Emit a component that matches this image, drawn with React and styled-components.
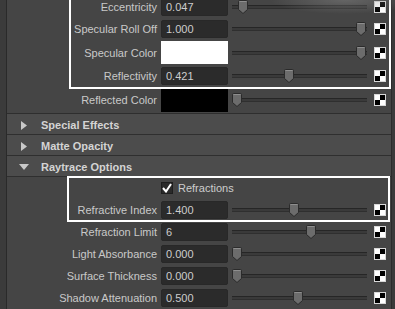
import React from "react";
import styled, { createGlobalStyle } from "styled-components";

const GlobalStyle = createGlobalStyle`
  html, body {
    margin: 0;
    height: 309px;
    overflow: hidden;
    background: #3b3b3b;
    font-family: "Liberation Sans", Arial, sans-serif;
  }
`;

const Page = styled.div`
  position: relative;
  width: 395px;
  height: 309px;
  overflow: hidden;
`;

const Frame = styled.div`
  margin-left: 6px;
  width: 384px;
  height: 320px;
  border-left: 1px solid #2a2a2a;
  border-right: 1px solid #2c2c2c;
  background: #454545;
  margin-top: -4px;
`;

const Section = styled.div`
  border-bottom: ${(p) => (p.$closed ? "1px solid #2e2e2e" : "none")};
`;

const Group = styled.div`
  position: relative;
  &::after {
    content: "";
    position: absolute;
    left: ${(p) => p.$left}px;
    right: ${(p) => p.$right}px;
    top: ${(p) => p.$top}px;
    bottom: ${(p) => p.$bottom}px;
    border: 2px solid #ffffff;
    pointer-events: none;
  }
`;

const Row = styled.div`
  display: grid;
  grid-template-columns: 150px 71px 146px 12px;
  align-items: center;
  height: ${(p) => p.$h || 22}px;
`;

const Label = styled.div`
  text-align: right;
  font-size: 11px;
  color: #c9c9c9;
  white-space: nowrap;
`;

const Field = styled.div`
  margin-left: 4px;
  height: 18px;
  box-sizing: border-box;
  padding-left: 4px;
  background: #2b2b2b;
  border: 1px solid #282828;
  border-radius: 2px;
  font-size: 11px;
  line-height: 16px;
  color: #cdcdcd;
`;

const Swatch = styled.div`
  margin-left: 4px;
  height: 23px;
  background: ${(p) => p.$color};
`;

const Slider = styled.div`
  position: relative;
  margin-left: 4px;
  width: 135px;
  height: 14px;
`;

const Track = styled.div`
  margin-top: 5px;
  height: 4px;
  box-sizing: border-box;
  background: #3a3a3a;
  border-top: 1px solid #262626;
  border-bottom: 1px solid #2f2f2f;
`;

const ThumbWrap = styled.div`
  position: absolute;
  top: 0;
  left: ${(p) => p.$pos}px;
  width: 10px;
  height: 14px;
`;

const Header = styled.div`
  display: flex;
  align-items: center;
  height: 18px;
  padding-top: 2px;
  border-bottom: 1px solid #2f2f2f;
  background: #4c4c4c;
  font-size: 11px;
  font-weight: bold;
  color: #d4d4d4;
`;

const Arrow = styled.div`
  width: 34px;
  display: flex;
  justify-content: center;
`;

const CheckRow = styled.div`
  display: flex;
  align-items: center;
  height: 22px;
  padding-left: 154px;
  font-size: 11px;
  color: #cdcdcd;
`;

const Box = styled.div`
  width: 12px;
  height: 12px;
  margin-right: 5px;
  box-sizing: border-box;
  background: #2a2a2a;
  border: 1px solid #1e1e1e;
  display: flex;
  align-items: center;
  justify-content: center;
`;

const Haze = styled.div`
  position: absolute;
  top: 0;
  left: 270px;
  width: 125px;
  height: 14px;
  background: radial-gradient(ellipse at 60% 0%, rgba(140, 140, 140, 0.45), rgba(120, 120, 120, 0) 70%);
  pointer-events: none;
`;

const Thumb = ({ pos }) => (
  <ThumbWrap $pos={pos}>
    <svg width="10" height="14" viewBox="0 0 10 14">
      <path d="M0.5 1.5 Q0.5 0.5 1.5 0.5 H8.5 Q9.5 0.5 9.5 1.5 V9.5 L5 13.5 L0.5 9.5 Z" fill="#6c6c6c" stroke="#2b2b2b" />
      <path d="M1.5 1.5 H8.5" stroke="#8e8e8e" />
    </svg>
  </ThumbWrap>
);

const Checker = () => (
  <svg width="12" height="12" viewBox="0 0 12 12">
    <rect x="0" y="0" width="12" height="12" fill="#d8d8d8" />
    <rect x="1" y="1" width="5" height="5" fill="#ffffff" />
    <rect x="6" y="1" width="5" height="5" fill="#000000" />
    <rect x="1" y="6" width="5" height="5" fill="#000000" />
    <rect x="6" y="6" width="5" height="5" fill="#ffffff" />
  </svg>
);

const Attr = ({ label, value, frac, color, h }) => (
  <Row $h={h}>
    <Label>{label}</Label>
    {color ? <Swatch $color={color} /> : <Field>{value}</Field>}
    <Slider>
      <Track />
      <Thumb pos={Math.round(frac * 124)} />
    </Slider>
    <Checker />
  </Row>
);

const Tri = ({ open }) =>
  open ? (
    <svg width="10" height="6" viewBox="0 0 10 6">
      <path d="M0 0 H10 L5 6 Z" fill="#c8c8c8" />
    </svg>
  ) : (
    <svg width="6" height="9" viewBox="0 0 6 9">
      <path d="M0 0 L6 4.5 L0 9 Z" fill="#c8c8c8" />
    </svg>
  );

const SectionHeader = ({ title, open }) => (
  <Header>
    <Arrow>
      <Tri open={open} />
    </Arrow>
    {title}
  </Header>
);

export default function App() {
  return (
    <>
      <GlobalStyle />
      <Page>
        <Frame>
          <Section $closed>
            <Group $left={62} $right={0} $top={-10} $bottom={-2}>
              <Attr label="Eccentricity" value="0.047" frac={0.047} />
              <Attr label="Specular Roll Off" value="1.000" frac={1} />
              <Attr label="Specular Color" color="#ffffff" frac={1} h={25} />
              <Attr label="Reflectivity" value="0.421" frac={0.421} />
            </Group>
            <Attr label="Reflected Color" color="#000000" frac={0} h={26} />
          </Section>
          <SectionHeader title="Special Effects" />
          <SectionHeader title="Matte Opacity" />
          <SectionHeader title="Raytrace Options" open />
          <Section>
            <Group $left={60} $right={1} $top={-1} $bottom={-1}>
              <CheckRow>
                <Box>
                  <svg width="10" height="10" viewBox="0 0 10 10">
                    <path d="M1 5 L4 8.5 L9 1" fill="none" stroke="#ffffff" strokeWidth="2" />
                  </svg>
                </Box>
                Refractions
              </CheckRow>
              <Attr label="Refractive Index" value="1.400" frac={0.46} />
            </Group>
            <Attr label="Refraction Limit" value="6" frac={0.6} />
            <Attr label="Light Absorbance" value="0.000" frac={0} />
            <Attr label="Surface Thickness" value="0.000" frac={0} />
            <Attr label="Shadow Attenuation" value="0.500" frac={0.49} />
          </Section>
        </Frame>
        <Haze />
      </Page>
    </>
  );
}
